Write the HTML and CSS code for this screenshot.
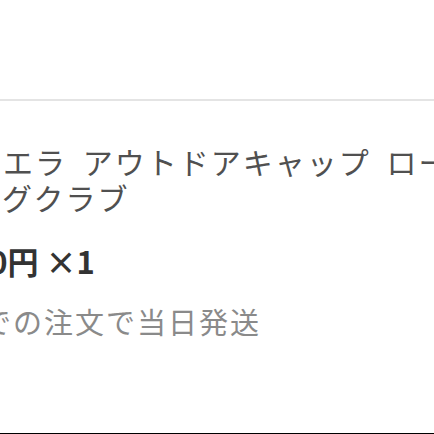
FILE: index.html
```html
<!DOCTYPE html>
<html lang="ja">
<head>
<meta charset="utf-8">
<title>注文内容</title>
<link rel="stylesheet" href="styles.css">
</head>
<body>

<div class="screen">
  <div class="header"></div>

  <div class="item">
    <div class="info">
      <p class="name">ニューエラ アウトドアキャップ ローキャップ ハイキングクラブ</p>
      <p class="price">12,980円 <span class="qty">×1</span></p>
      <p class="ship">9時までの注文で当日発送</p>
    </div>
  </div>
</div>

</body>
</html>
```

FILE: styles.css
```css
  body {
	margin: 0;
	background: #ffffff;
	font-family: "Noto Sans CJK JP", "Noto Sans", sans-serif;
  }
  .screen {
	height: 433px;
	overflow: hidden;
	border-bottom: 1px solid #000000;
  }
  .header {
	height: 99px;
	border-bottom: 2px solid #e4e4e4;
  }
  .item { padding-top: 42px; }
  /* the info column runs wider than the screen, its left part scrolled off */
  .info {
	margin-left: -93px;
	width: 737px;
  }
  .info p { margin: 0; }
  .info .name {
	font-size: 30px;
	line-height: 36px;
	letter-spacing: 2px;
	word-spacing: 7px;
	color: #505050;
  }
  .info .price {
	margin-top: 26px;
	text-indent: -1px;
	font-size: 31px;
	line-height: 40px;
	font-weight: bold;
	color: #333333;
  }
  .info .ship {
	margin-top: 22px;
	text-indent: -5px;
	font-size: 29px;
	line-height: 36px;
	letter-spacing: 2px;
	color: #8a8a8a;
  }
```
